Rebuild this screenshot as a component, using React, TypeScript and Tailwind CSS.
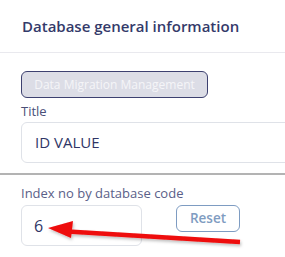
import React from "react";

export default function App() {
  return (
    <div
      className="relative w-[285px] h-[257px] overflow-hidden bg-white"
      style={{ fontFamily: '"Open Sans", "Noto Sans", sans-serif' }}
    >
      <div className="h-[53px] flex items-center pl-[22px] border-b border-[#e9e9ee]">
        <span className="text-[15px] font-semibold text-[#343a6a]">
          Database general information
        </span>
      </div>
      <div className="pl-[21px]">
        <div className="mt-[18px] w-[187px] h-[27px] rounded-[6px] border border-[#3d4170] bg-[#dcdde6] flex items-center justify-center">
          <span className="text-[12px] text-[#f5f5f8]">Data Migration Management</span>
        </div>
        <div className="mt-[4px] h-[20px] text-[13px] leading-[18px] text-[#4a4f78]">Title</div>
        <div className="h-[41px] w-[300px] rounded-[6px] border border-[#dfe2e8] flex items-center pl-[13px]">
          <span className="text-[15px] text-[#2f3566]">ID VALUE</span>
        </div>
      </div>
      <div className="mt-[10px] h-[2px] bg-[#b3b3b3]" />
      <div className="pl-[21px]">
        <div className="mt-[9px] h-[20px] text-[13px] leading-[18px] text-[#5a6088]">Index no by database code</div>
        <div className="mt-[1px] flex items-start">
          <div className="h-[41px] w-[121px] rounded-[6px] border border-[#dfe2e8] flex items-center pl-[12px]">
            <span className="text-[16px] text-[#2f3566]">6</span>
          </div>
          <button className="ml-[34px] w-[64px] h-[27px] rounded-[6px] border border-[#7e9cc2] text-[13.5px] font-semibold text-[#7f9cc1] bg-white flex items-center justify-center">
            Reset
          </button>
        </div>
      </div>
      <svg className="absolute left-0 top-0" width="285" height="257" viewBox="0 0 285 257">
        <defs>
          <filter id="sh" x="-10%" y="-50%" width="120%" height="200%">
            <feDropShadow dx="1" dy="2" stdDeviation="1.5" floodColor="#000" floodOpacity="0.25" />
          </filter>
        </defs>
        <g filter="url(#sh)">
          <line x1="68" y1="231.5" x2="240" y2="242" stroke="#ee0a0a" strokeWidth="4.5" />
          <polygon points="48,228 73,221 71,238" fill="#ee0a0a" />
        </g>
      </svg>
    </div>
  );
}
